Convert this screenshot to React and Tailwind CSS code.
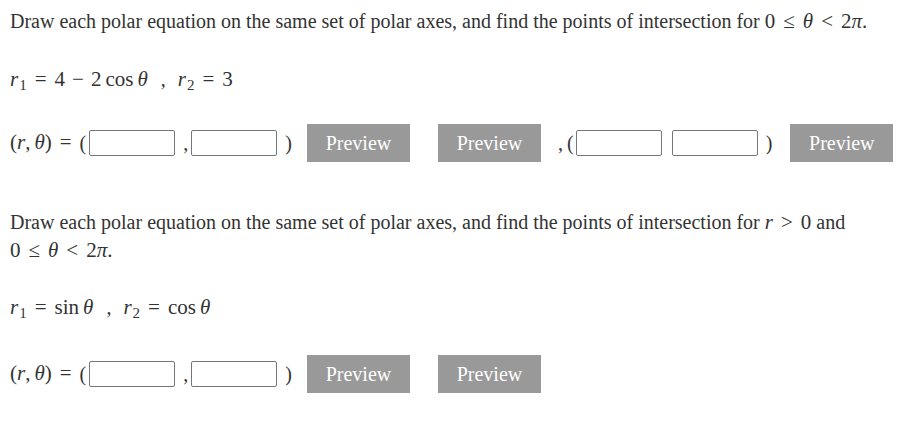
import React from "react";

const serif = { fontFamily: '"Liberation Serif", "Times New Roman", serif' };

function V({ children }) {
  return <span className="italic">{children}</span>;
}

function Rel({ children }) {
  return <span className="mx-[8px]">{children}</span>;
}

function Bin({ children }) {
  return <span className="mx-[7px]">{children}</span>;
}

function M({ children }) {
  return <span className="text-[21px] whitespace-nowrap">{children}</span>;
}

function Sub({ children }) {
  return <span className="text-[15px] relative top-[4px] ml-[1px]">{children}</span>;
}

function Box() {
  return (
    <span className="inline-block align-middle w-[86px] h-[26px] border border-[#767676] rounded-[2px] bg-white" />
  );
}

function Btn() {
  return (
    <span className="inline-flex items-center justify-center w-[103px] h-[38px] bg-[#999999] text-white text-[20px]">
      Preview
    </span>
  );
}

function RTheta() {
  return (
    <M>
      (<V>r</V>,<span className="ml-[4px]" /><V>θ</V>)<Rel>=</Rel>
    </M>
  );
}

function AnswerRow({ extra, className }) {
  return (
    <div className={"h-[38px] flex items-center " + className}>
      <RTheta />
      <span>(</span>
      <span className="ml-[3px] flex"><Box /></span>
      <span className="ml-[8px] mr-[3px]">,</span>
      <span className="flex"><Box /></span>
      <span className="ml-[8px]">)</span>
      <span className="ml-[15px] flex"><Btn /></span>
      <span className="ml-[28px] flex"><Btn /></span>
      {extra && (
        <>
          <span className="ml-[17px]">,</span>
          <span className="ml-[4px]">(</span>
          <span className="ml-[2px] flex"><Box /></span>
          <span className="ml-[10px] flex"><Box /></span>
          <span className="ml-[8px]">)</span>
          <span className="ml-[18px] flex"><Btn /></span>
        </>
      )}
    </div>
  );
}

export default function App() {
  return (
    <div className="bg-white w-[899px] h-[422px] pl-[10px] text-[#333] text-[20px]" style={serif}>
      <div className="h-[42px] leading-[42px] whitespace-nowrap">
        Draw each polar equation on the same set of polar axes, and find the points of intersection for{" "}
        <M>
          0<Rel>≤</Rel><V>θ</V><Rel>&lt;</Rel>2<V>π</V>.
        </M>
      </div>

      <div className="mt-[16px] h-[42px] leading-[42px]">
        <M>
          <V>r</V><Sub>1</Sub><Rel>=</Rel>4<Bin>−</Bin>2<span className="ml-[4px]">cos</span><span className="ml-[4px]" /><V>θ</V>
        </M>
        <span className="ml-[13px] mr-[12px]">,</span>
        <M>
          <V>r</V><Sub>2</Sub><Rel>=</Rel>3
        </M>
      </div>

      <AnswerRow extra className="mt-[24px]" />

      <div className="mt-[46px] leading-[28px]">
        Draw each polar equation on the same set of polar axes, and find the points of intersection for{" "}
        <M>
          <V>r</V><Rel>&gt;</Rel>0
        </M>{" "}
        and
        <br />
        <M>
          0<Rel>≤</Rel><V>θ</V><Rel>&lt;</Rel>2<V>π</V>.
        </M>
      </div>

      <div className="mt-[22px] h-[42px] leading-[42px]">
        <M>
          <V>r</V><Sub>1</Sub><Rel>=</Rel>sin<span className="ml-[4px]" /><V>θ</V>
        </M>
        <span className="ml-[13px] mr-[12px]">,</span>
        <M>
          <V>r</V><Sub>2</Sub><Rel>=</Rel>cos<span className="ml-[4px]" /><V>θ</V>
        </M>
      </div>

      <AnswerRow className="mt-[27px]" />
    </div>
  );
}
